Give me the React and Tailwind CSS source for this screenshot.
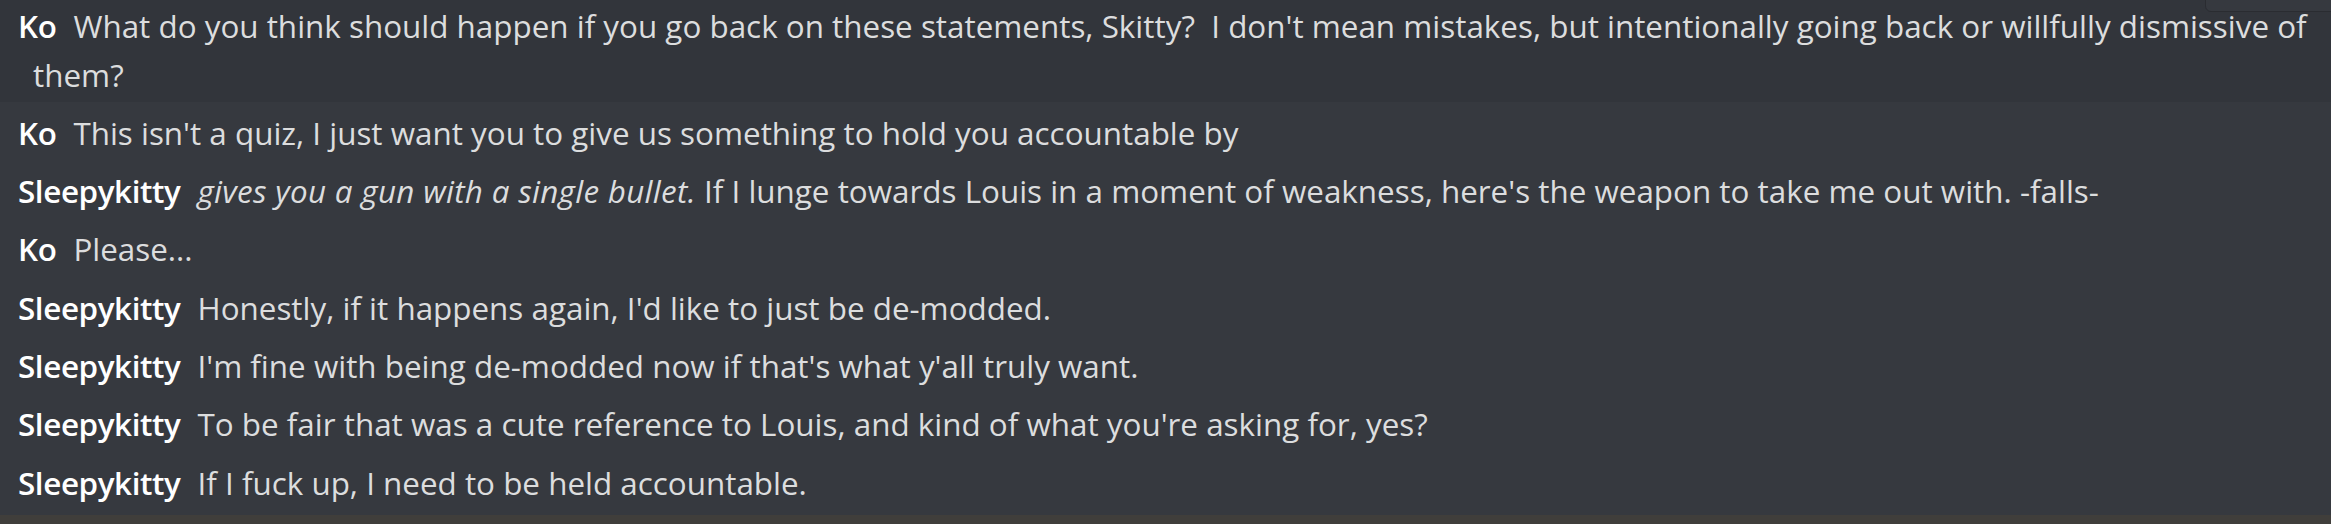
import React from "react";

const rows = [
  { name: "Ko", text: "What do you think should happen if you go back on these statements, Skitty?  I don't mean mistakes, but intentionally going back or willfully dismissive of them?", hover: true },
  { name: "Ko", text: "This isn't a quiz, I just want you to give us something to hold you accountable by" },
  { name: "Sleepykitty", italic: "gives you a gun with a single bullet.", text: " If I lunge towards Louis in a moment of weakness, here's the weapon to take me out with. -falls-" },
  { name: "Ko", text: "Please..." },
  { name: "Sleepykitty", text: "Honestly, if it happens again, I'd like to just be de-modded." },
  { name: "Sleepykitty", text: "I'm fine with being de-modded now if that's what y'all truly want." },
  { name: "Sleepykitty", text: "To be fair that was a cute reference to Louis, and kind of what you're asking for, yes?" },
  { name: "Sleepykitty", text: "If I fuck up, I need to be held accountable." },
];

export default function App() {
  return (
    <div
      className="w-[2331px] h-[524px] overflow-hidden flex flex-col bg-[#36393f]"
      style={{ fontFamily: '"Open Sans", "Noto Sans", sans-serif' }}
    >
      <div className="flex-1 flex flex-col -mt-[5px]">
        {rows.map((r, i) => (
          <div
            key={i}
            className={
              "relative pt-[5.5px] pb-[3.8px] pl-[33px] pr-[20px] text-[31.4px] leading-[49px] " +
              (r.hover ? "bg-[#32353b]" : "")
            }
          >
            <p className="-indent-[15px] whitespace-pre-wrap text-[#dcddde]">
              <span className="font-semibold text-white tracking-[-0.4px] mr-[17px]">{r.name}</span>
              {r.italic ? <em className="italic tracking-[0.3px]">{r.italic}</em> : null}
              {r.text}
            </p>
            {r.hover ? (
              <div className="absolute top-[-28px] right-[-20px] w-[146px] h-[45px] rounded-[6px] border border-[#2a2c31] bg-[#36393f]" />
            ) : null}
          </div>
        ))}
      </div>
      <div className="h-[9px] bg-[#403e3b]" />
    </div>
  );
}
